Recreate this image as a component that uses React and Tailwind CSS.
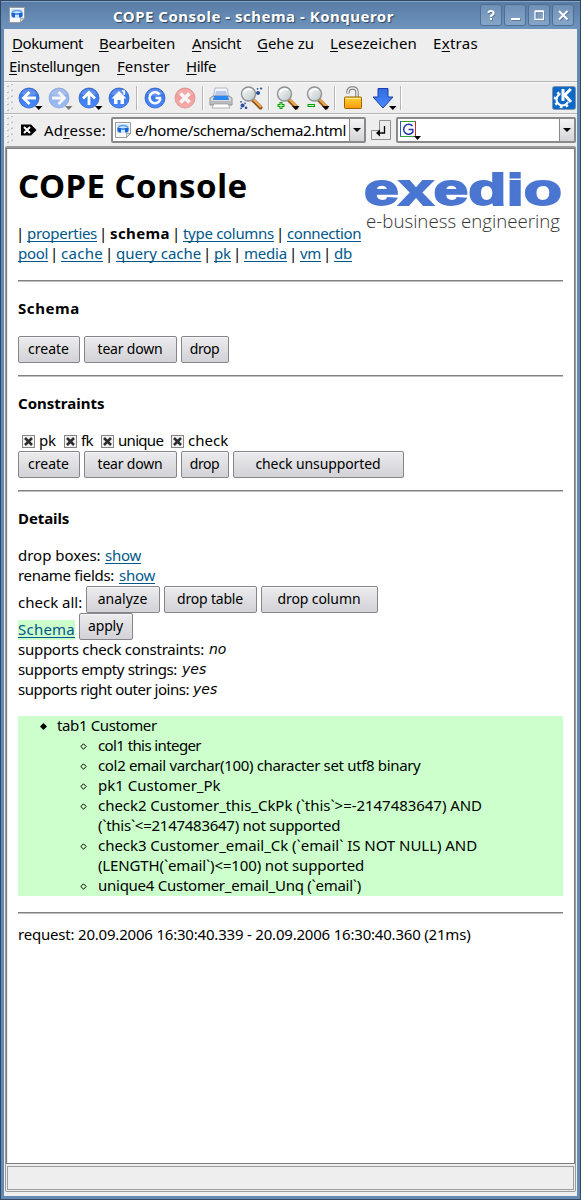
import { clsx } from "clsx";

const Line = ({ className, children }) => (
  <div className={clsx("flex h-[20px] leading-[18px] whitespace-pre", className)}>{children}</div>
);

const A = ({ className, children }) => (
  <a
    href="#"
    className={clsx(
      "block text-[#00578a] underline decoration-1 underline-offset-[2px] [text-decoration-skip-ink:none]",
      className
    )}
  >
    {children}
  </a>
);

const Bar = ({ className }) => <span className={clsx("block", className || "w-[13px] pl-[2px]")}>|</span>;

const Rule = ({ className }) => (
  <div className={clsx("h-[2px] border-t border-t-[#808080] border-b border-b-[#c0c0c0]", className)} />
);

const Btn = ({ className, children }) => (
  <button
    className={clsx(
      "block h-[27px] shrink-0 rounded-[2px] border border-[#858689] bg-linear-to-b from-[#ececee] to-[#d2d2d7] pr-[1px] pb-[2px] text-center text-[14px] leading-[22px] whitespace-nowrap shadow-[inset_0_1px_0_#f6f6f8]",
      className
    )}
  >
    {children}
  </button>
);

const Check = ({ className, label, labelClass }) => (
  <label className={clsx("flex items-start", className)}>
    <svg width="13" height="13" viewBox="0 0 13 13" className="mt-[4px] mr-[4px] block shrink-0">
      <rect x="0.5" y="0.5" width="12" height="12" fill="#f2f2f2" stroke="#858585" />
      <path d="M3 3 10 10M10 3 3 10" stroke="#2c3033" strokeWidth="2.6" />
    </svg>
    <span className={labelClass}>{label}</span>
  </label>
);

const Menu = ({ pre, k, post, className }) => (
  <span className={clsx("block whitespace-nowrap", className)}>
    {pre}
    <span className="underline decoration-1 underline-offset-[2px]">{k}</span>
    {post}
  </span>
);

const Grip = () => (
  <svg width="8" height="28" viewBox="0 0 8 28" className="block shrink-0">
    {[1, 7, 13, 19, 25].map((y) => (
      <g key={y}>
        <path d={`M1 ${y + 1}.5h1.5v-1M5 ${y - 1}.5h1.5v-1`} fill="none" stroke="#b4b4b4" />
        <path d={`M0 ${y}.5h1M4 ${y - 1}.5h1`} stroke="#fff" />
      </g>
    ))}
  </svg>
);

const Caret = ({ x = 18, y = 22, fill = "#000" }) => (
  <path d={`M${x} ${y}h7.500l-3.750 4z`} fill={fill} />
);

const Slot = ({ children }) => (
  <svg width="30" height="28" viewBox="0 0 30 28" className="block shrink-0">
    {children}
  </svg>
);

const Sep = () => (
  <div className="flex h-[28px] w-[6px] shrink-0 justify-center">
    <div className="my-[2px] w-[2px] border-r border-l border-l-[#b6b6b6] border-r-white" />
  </div>
);

const Ball = ({ red, faded, children }) => (
  <g opacity={faded ? 0.5 : 1}>
    <circle cx="15" cy="14" r="10" fill={red ? "url(#red)" : "url(#blue)"} stroke={red ? "#d03030" : "#2c5fc4"} strokeWidth="0.8" />
    <path d="M7 10a9 9 0 0 1 16 0q-8 4-16 0z" fill="#fff" opacity="0.22" />
    {children}
  </g>
);

const Lens = () => (
  <g>
    <path d="M17 16 24.5 23.5" stroke="#8a5220" strokeWidth="4" strokeLinecap="round" />
    <path d="M17.5 15.5 24.5 22.5" stroke="#f0a848" strokeWidth="2.2" strokeLinecap="round" />
    <circle cx="12.5" cy="10" r="7" fill="url(#glass)" stroke="#8d9294" strokeWidth="1.4" />
    <path d="M8 8q3-4 8-2" fill="none" stroke="#fff" strokeWidth="1.5" />
  </g>
);

const PageIcon = () => (
  <svg width="16" height="16" viewBox="0 0 16 16" className="block shrink-0">
    <path d="M.5.5h15v11l-4 4H.5z" fill="#fafafa" stroke="#9a9a9a" />
    <path d="M15.500 11.500h-4v4z" fill="#dedede" stroke="#8a8a8a" strokeWidth="0.7" />
    <rect x="2" y="2" width="12" height="9" fill="#d3e6fb" />
    <path d="M3 7q0-3.500 5-3.500T13 7" fill="none" stroke="#5fa4f2" strokeWidth="1.600" />
    <path d="M2.500 6h3.500v4.500H4L2.500 9zM13.500 6H10v4.500h2l1.500-1.500z" fill="#1763d3" />
    <path d="M6 7h4" stroke="#2c7ae6" strokeWidth="1.500" />
  </svg>
);

const WinBtn = ({ children }) => (
  <div className="h-[22px] w-[22px] rounded-[3px] border border-[#4d6f96] bg-linear-to-b from-[#7090b6] to-[#86a5c8]">
    <svg width="20" height="20" viewBox="0 0 20 20" className="block">
      <g transform="translate(.7 .8)" stroke="#35506f" opacity="0.6" fill="none">{children}</g>
      <g stroke="#fff" fill="none">{children}</g>
    </svg>
  </div>
);

function TitleBar() {
  return (
    <div className="flex h-[29px] shrink-0 items-start border-t border-t-[#33485f] bg-linear-to-b from-[#587ba4] to-[#6e94be] shadow-[inset_0_1px_0_#7fa3cb]">
      <div className="mt-[6px] ml-[8px] w-[104px]">
        <PageIcon />
      </div>
      <div className="mt-[5px] w-[367px] text-[15px] leading-[20px] font-bold tracking-[0.5px] whitespace-nowrap text-white [text-shadow:1px_1px_1px_#2d4560]">
        COPE Console - schema - Konqueror
      </div>
      <div className="mt-[3px] flex gap-[2px]">
        <WinBtn>
          <path d="M7.300 7.800q.300-1.800 2.700-1.800t2.700 2q0 1.300-1.500 2t-1.200 2M10 13v2" strokeWidth="2" />
        </WinBtn>
        <WinBtn>
          <path d="M6 14h9" strokeWidth="2" />
        </WinBtn>
        <WinBtn>
          <path d="M6 6.500h8.500v8H6zM6 6h8.500" strokeWidth="1.300" />
        </WinBtn>
        <WinBtn>
          <path d="M6 6l8.500 8.500M14.500 6 6 14.500" strokeWidth="2" />
        </WinBtn>
      </div>
    </div>
  );
}

function Toolbar() {
  return (
    <div className="flex h-[32px] shrink-0 items-center border-t border-t-[#b4b4b4] pl-[2px] shadow-[inset_0_1px_0_#fafafa]">
      <Grip />
      <Slot>
        <Ball><path d="M22 14H10M15.500 8 9.500 14l6 6" fill="none" stroke="#fff" strokeWidth="2.800" /></Ball>
        <Caret x="21" />
      </Slot>
      <Slot>
        <Ball faded><path d="M8 14h12M14.500 8l6 6-6 6" fill="none" stroke="#fff" strokeWidth="2.800" /></Ball>
        <Caret x="21" fill="#777" />
      </Slot>
      <Slot>
        <Ball><path d="M15 21V9M9 14.500l6-6 6 6" fill="none" stroke="#fff" strokeWidth="2.800" /></Ball>
        <Caret x="21" />
      </Slot>
      <Slot>
        <Ball>
          <path d="M7.500 14.500 15 7l7.500 7.500h-2.500V20h-3.500v-4h-3v4H10v-5.500z" fill="#fff" />
          <path d="M18 7h2.200v4" fill="none" stroke="#fff" strokeWidth="1.500" />
        </Ball>
      </Slot>
      <Sep />
      <Slot>
        <Ball><path d="M19.500 10.500A5.500 5.500 0 1 0 20 16v-2h-4.500" fill="none" stroke="#fff" strokeWidth="2.600" /></Ball>
      </Slot>
      <Slot>
        <Ball red faded><path d="M10.500 9.500l9 9M19.500 9.500l-9 9" stroke="#fff" strokeWidth="3.600" /></Ball>
      </Slot>
      <Sep />
      <Slot>
        <path d="M9 4h12l2 10H7z" fill="#f2f6ff" stroke="#9aa3b4" strokeWidth="0.700" />
        <path d="M10 7h10l2 7H8z" fill="#b7c9ee" />
        <path d="M4 14l3-2h16l3 2v7H4z" fill="#d9d9da" stroke="#77797c" strokeWidth="0.800" />
        <path d="M8 12h14l1 4H7z" fill="#2a87ee" />
        <path d="M5 18h20M5 20h20" stroke="#8b8d90" strokeWidth="0.800" />
        <path d="M8 20h14l2 4H6z" fill="#fff" stroke="#999" strokeWidth="0.700" />
      </Slot>
      <Slot>
        <Lens />
        <path d="M22 7a2 2 0 1 0 .1 0M25 3.500a1 1 0 1 0 .1 0M21.500 4a.8.8 0 1 0 .1 0M6.500 19.500a2 2 0 1 0 .1 0M5 17a.8.8 0 1 0 .1 0M10 22.500a1.300 1.300 0 1 0 .1 0M9 18.500a.8.8 0 1 0 .1 0M5 23.500a.8.8 0 1 0 .1 0" fill="#2d4f9c" />
      </Slot>
      <Sep />
      <Slot>
        <Lens />
        <path d="M9 18v7M5.500 21.500h7" stroke="#0c9e0c" strokeWidth="3" />
        <path d="M9 19v5M6.500 21.500h5" stroke="#b9ffb0" strokeWidth="1" />
        <Caret x="20" />
      </Slot>
      <Slot>
        <Lens />
        <path d="M5.500 21.500h7.500" stroke="#0c9e0c" strokeWidth="3" />
        <path d="M6.500 21.500h5.500" stroke="#b9ffb0" strokeWidth="1" />
        <Caret x="20" />
      </Slot>
      <Sep />
      <Slot>
        <path d="M10 9.500V8q0-4 4.500-4T19 8v5" fill="none" stroke="#76797c" strokeWidth="3.400" />
        <path d="M10 9.500V8q0-4 4.500-4T19 8v5" fill="none" stroke="#e6e6e6" strokeWidth="1.600" />
        <rect x="6.500" y="13" width="17" height="11.500" rx="1" fill="url(#gold)" stroke="#9b6500" />
        <path d="M7.500 14.500h15" stroke="#fff3a0" />
      </Slot>
      <Slot>
        <path d="M10 4.500h10V13h5L15 24 5 13h5z" fill="url(#blue)" stroke="#1c3fa8" />
        <Caret x="21" />
      </Slot>
      <Sep />
      <div className="ml-auto pr-[1px]">
        <svg width="24" height="24" viewBox="0 0 24 24" className="block">
          <rect x="0.500" y="0.500" width="23" height="23" rx="2" fill="#0d68c8" stroke="#7f96b0" />
          <circle cx="10.500" cy="13.500" r="6" fill="none" stroke="#fff" strokeWidth="2.200" />
          <circle cx="10.500" cy="13.500" r="7.700" fill="none" stroke="#fff" strokeWidth="2.200" strokeDasharray="2.600 3.447" />
          <path d="M8.500 2h12v17l-5-3.500-7 .500z" fill="#0d68c8" />
          <path d="M11 3v12M18.800 3l-6 6 6.200 7" fill="none" stroke="#fff" strokeWidth="3" />
        </svg>
      </div>
    </div>
  );
}

function AddressBar() {
  return (
    <div className="flex h-[33px] shrink-0 items-center border-t border-t-[#b4b4b4] pb-[1px] pl-[2px] shadow-[inset_0_1px_0_#fafafa]">
      <Grip />
      <svg width="16" height="12" viewBox="0 0 16 12" className="mr-[7px] ml-[7px] block shrink-0">
        <path d="M0 .5h10L15.500 6 10 11.500H0z" fill="#000" />
        <path d="M3 3l6 6M9 3 3 9" stroke="#fff" strokeWidth="2" />
      </svg>
      <div className="w-[67px] shrink-0 text-[15px] leading-[20px] tracking-[0.25px] whitespace-nowrap">
        Ad<span className="underline decoration-1 underline-offset-[2px]">r</span>esse:
      </div>
      <div className="flex h-[26px] w-[255px] shrink-0 items-center overflow-hidden rounded-[2px] border-2 border-[#8a8a8a] bg-white">
        <div className="ml-[2px] w-[20px] shrink-0">
          <PageIcon />
        </div>
        <div className="w-[214px] shrink-0 text-[15px] leading-[20px] tracking-[-0.36px] whitespace-nowrap">
          e/home/schema/schema2.html
        </div>
        <div className="flex h-full flex-1 items-center justify-center border-l border-l-[#8a8a8a] bg-linear-to-b from-[#f4f4f5] to-[#d4d4d8]">
          <svg width="8" height="4" viewBox="0 0 8 4"><path d="M0 0h8L4 4z" /></svg>
        </div>
      </div>
      <svg width="20" height="20" viewBox="0 0 20 20" className="ml-[5px] block shrink-0">
        <path d="M8.500.5h11v19H.5v-9h8z" fill="#ececec" stroke="#8e8e8e" />
        <path d="M13.500 6v7H6" fill="none" stroke="#000" strokeWidth="1.300" />
        <path d="M9 9.500v7L5 13z" fill="#000" />
      </svg>
      <div className="ml-[5px] flex h-[26px] w-[180px] shrink-0 items-center overflow-hidden rounded-[2px] border-2 border-[#8a8a8a] bg-white">
        <svg width="22" height="20" viewBox="0 0 22 20" className="ml-[2px] block shrink-0">
          <path d="M15.500 1.500H.5v15" fill="none" stroke="#3b9c3b" />
          <path d="M.5 1v15.500" stroke="#2a55c8" />
          <path d="M0 16.500h15" stroke="#3b9c3b" />
          <path d="M15.500 1v15" stroke="#cc2b2b" />
          <path d="M12.500 6A5 5 0 1 0 12.800 12V9.500H8.500" fill="none" stroke="#2038a8" strokeWidth="1.500" />
          <path d="M14 16h7l-3.500 4z" />
        </svg>
        <div className="ml-auto flex h-full w-[15px] items-center justify-center border-l border-l-[#8a8a8a] bg-linear-to-b from-[#f4f4f5] to-[#d4d4d8]">
          <svg width="8" height="4" viewBox="0 0 8 4"><path d="M0 0h8L4 4z" /></svg>
        </div>
      </div>
    </div>
  );
}

const Item = ({ className, children, second }) => (
  <li>
    <Line>
      <span className="flex w-[20px] shrink-0">
        <svg width="7" height="7" viewBox="0 0 7 7" className="mt-[7px] ml-[2px] block">
          <path d="M3.500.8 6.200 3.500 3.500 6.200.8 3.500z" fill="none" stroke="#000" />
        </svg>
      </span>
      <span className={className}>{children}</span>
    </Line>
    {second}
  </li>
);

function Page() {
  return (
    <div className="flex flex-1 flex-col bg-white pt-[16px] pr-[11px] pl-[10px] text-[15px]">
      <div className="flex h-[60px] items-start justify-between">
        <h1 className="pt-[1px] text-[33px] leading-[40px] font-bold tracking-[0.450px] whitespace-nowrap">COPE Console</h1>
        <svg width="200" height="68" viewBox="0 0 200 68" className="block shrink-0 overflow-visible">
          <text x="1" y="40" textLength="198" lengthAdjust="spacingAndGlyphs" fontFamily="Liberation Sans" fontWeight="bold" fontSize="44.500" fill="#4a76d2" stroke="#4a76d2" strokeWidth="1.800">exedio</text>
          <text x="3" y="63" textLength="194" lengthAdjust="spacingAndGlyphs" fontFamily="Open Sans" fontWeight="300" fontSize="18" fill="#333">e-business engineering</text>
        </svg>
      </div>
      <Line className="-mt-px">
        <Bar className="-ml-[2px] w-[11px]" />
        <A className="w-[70px] tracking-[-0.3px]">properties</A>
        <Bar />
        <span className="w-[60px] font-bold tracking-[0.4px]">schema</span>
        <Bar />
        <A className="w-[91px] tracking-[-0.3px]">type columns</A>
        <Bar />
        <A className="w-[74px] tracking-[-0.41px]">connection</A>
      </Line>
      <Line>
        <A className="w-[30px] tracking-[-0.31px]">pool</A>
        <Bar />
        <A className="w-[42px] tracking-[0.29px]">cache</A>
        <Bar />
        <A className="w-[85px]">query cache</A>
        <Bar />
        <A className="w-[17px] tracking-[-0.13px]">pk</A>
        <Bar />
        <A className="w-[43px] tracking-[-0.2px]">media</A>
        <Bar />
        <A className="w-[21px] tracking-[-0.33px]">vm</A>
        <Bar />
        <A className="w-[18px] tracking-[-0.23px]">db</A>
      </Line>
      <Rule className="mt-[16px]" />
      <h3 className="mt-[17px] h-[20px] leading-[18px] font-bold tracking-[0.6px]">Schema</h3>
      <div className="mt-[17px] flex gap-[4px]">
        <Btn className="w-[62px]">create</Btn>
        <Btn className="w-[93px] tracking-[-0.2px]">tear down</Btn>
        <Btn className="w-[48px] tracking-[-0.4px]">drop</Btn>
      </div>
      <Rule className="mt-[12px]" />
      <h3 className="mt-[17px] h-[20px] leading-[18px] font-bold">Constraints</h3>
      <div className="mt-[17px] flex h-[20px] pl-[4px] leading-[18px]">
        <Check className="w-[42px]" label="pk" labelClass="tracking-[-0.13px]" />
        <Check className="w-[37px]" label="fk" labelClass="tracking-[-0.6px]" />
        <Check className="w-[70px]" label="unique" labelClass="tracking-[-0.7px]" />
        <Check label="check" />
      </div>
      <div className="flex gap-[4px]">
        <Btn className="w-[62px]">create</Btn>
        <Btn className="w-[93px] tracking-[-0.2px]">tear down</Btn>
        <Btn className="w-[48px] tracking-[-0.4px]">drop</Btn>
        <Btn className="w-[171px] tracking-[-0.1px]">check unsupported</Btn>
      </div>
      <Rule className="mt-[12px]" />
      <h3 className="mt-[17px] h-[20px] leading-[18px] font-bold tracking-[-0.1px]">Details</h3>
      <Line className="mt-[17px]">
        <span className="w-[87px]">drop boxes:</span>
        <A className="w-[36px] tracking-[-0.26px]">show</A>
      </Line>
      <Line>
        <span className="w-[101px] tracking-[-0.3px]">rename fields:</span>
        <A className="w-[36px] tracking-[-0.26px]">show</A>
      </Line>
      <div className="flex h-[27px]">
        <span className="w-[68px] shrink-0 pt-[7px] leading-[18px]">check all:</span>
        <Btn className="mr-[4px] w-[74px]">analyze</Btn>
        <Btn className="mr-[4px] w-[93px] tracking-[-0.2px]">drop table</Btn>
        <Btn className="w-[117px] tracking-[-0.1px]">drop column</Btn>
      </div>
      <div className="flex h-[27px]">
        <span className="mt-[7px] mr-[4px] h-[20px] w-[57px] shrink-0 bg-[#ccffcc] leading-[18px]">
          <A className="tracking-[0.23px]">Schema</A>
        </span>
        <Btn className="w-[54px] tracking-[-0.2px]">apply</Btn>
      </div>
      <Line>
        <span className="w-[191px] tracking-[-0.26px]">supports check constraints:</span>
        <i className="font-['DejaVu_Sans',sans-serif] text-[14px]">no</i>
      </Line>
      <Line>
        <span className="w-[164px] tracking-[-0.38px]">supports empty strings:</span>
        <i className="font-['DejaVu_Sans',sans-serif] text-[14px]">yes</i>
      </Line>
      <Line>
        <span className="w-[175px] tracking-[-0.49px]">supports right outer joins:</span>
        <i className="font-['DejaVu_Sans',sans-serif] text-[14px]">yes</i>
      </Line>
      <ul className="mt-[16px] bg-[#ccffcc]">
        <li>
          <Line className="pl-[22px]">
            <span className="flex w-[17px] shrink-0">
              <svg width="7" height="7" viewBox="0 0 7 7" className="mt-[7px] block">
                <path d="M3.500 0 7 3.500 3.500 7 0 3.500z" />
              </svg>
            </span>
            <span className="tracking-[-0.38px]">tab1 Customer</span>
          </Line>
          <ul className="pl-[60px]">
            <Item className="tracking-[-0.6px]">col1 this integer</Item>
            <Item className="tracking-[-0.34px]">col2 email varchar(100) character set utf8 binary</Item>
            <Item>pk1 Customer_Pk</Item>
            <Item className="tracking-[-0.04px]" second={<Line className="pl-[20px] tracking-[-0.26px]">(`this`&lt;=2147483647) not supported</Line>}>
              check2 Customer_this_CkPk (`this`&gt;=-2147483647) AND
            </Item>
            <Item className="tracking-[-0.04px]" second={<Line className="pl-[20px] tracking-[-0.13px]">(LENGTH(`email`)&lt;=100) not supported</Line>}>
              check3 Customer_email_Ck (`email` IS NOT NULL) AND
            </Item>
            <Item className="tracking-[-0.26px]">unique4 Customer_email_Unq (`email`)</Item>
          </ul>
        </li>
      </ul>
      <Rule className="mt-[16px]" />
      <Line className="mt-[11px] tracking-[-0.2px]">request: 20.09.2006 16:30:40.339 - 20.09.2006 16:30:40.360 (21ms)</Line>
    </div>
  );
}

export default function App() {
  return (
    <div className="flex h-[1200px] w-[581px] flex-col border-r border-b border-l border-[#33485f] bg-[#6389b5] font-['Noto_Sans',sans-serif] text-black">
      <svg width="0" height="0" className="absolute">
        <defs>
          <linearGradient id="blue" x1="0" y1="0" x2="0" y2="1">
            <stop offset="0" stopColor="#2f6ce0" />
            <stop offset="1" stopColor="#4b8bff" />
          </linearGradient>
          <linearGradient id="red" x1="0" y1="0" x2="0" y2="1">
            <stop offset="0" stopColor="#ee3c3c" />
            <stop offset="1" stopColor="#ff6a6a" />
          </linearGradient>
          <linearGradient id="gold" x1="0" y1="0" x2="0" y2="1">
            <stop offset="0" stopColor="#ffd23c" />
            <stop offset="1" stopColor="#f79a06" />
          </linearGradient>
          <linearGradient id="glass" x1="0" y1="0" x2="1" y2="1">
            <stop offset="0" stopColor="#ffffff" />
            <stop offset="1" stopColor="#b9c3c6" />
          </linearGradient>
        </defs>
      </svg>
      <TitleBar />
      <div className="mx-[3px] mb-[3px] flex flex-1 flex-col bg-[#eeeeee]">
        <div className="h-[52px] shrink-0 pt-[4px] text-[15px] leading-[20px]">
          <div className="flex h-[23px] pl-[8px]">
            <Menu className="w-[87px] tracking-[-0.44px]" k="D" post="okument" />
            <Menu className="w-[93px] tracking-[-0.15px]" k="B" post="earbeiten" />
            <Menu className="w-[65px] tracking-[-0.4px]" k="A" post="nsicht" />
            <Menu className="w-[73px] tracking-[-0.05px]" k="G" post="ehe zu" />
            <Menu className="w-[103px] tracking-[0.14px]" k="L" post="esezeichen" />
            <Menu className="tracking-[0.3px]" pre="E" k="x" post="tras" />
          </div>
          <div className="flex h-[23px] pl-[5px]">
            <Menu className="w-[108px] tracking-[-0.37px]" k="E" post="instellungen" />
            <Menu className="w-[69px]" k="F" post="enster" />
            <Menu className="tracking-[-0.5px]" k="H" post="ilfe" />
          </div>
        </div>
        <Toolbar />
        <AddressBar />
        <div className="mx-[1px] mb-[4px] flex flex-1 flex-col rounded-[2px] border border-t-2 border-[#9a9a9a]">
          <div className="flex flex-1 flex-col border border-[#7c7c7c]">
            <div className="flex flex-1 flex-col pl-px">
              <Page />
            </div>
          </div>
          <div className="mx-[1px] mt-[2px] mb-[1px] h-[24px] shrink-0 border border-[#9c9c9c] bg-[#eeeeee]" />
        </div>
      </div>
    </div>
  );
}
